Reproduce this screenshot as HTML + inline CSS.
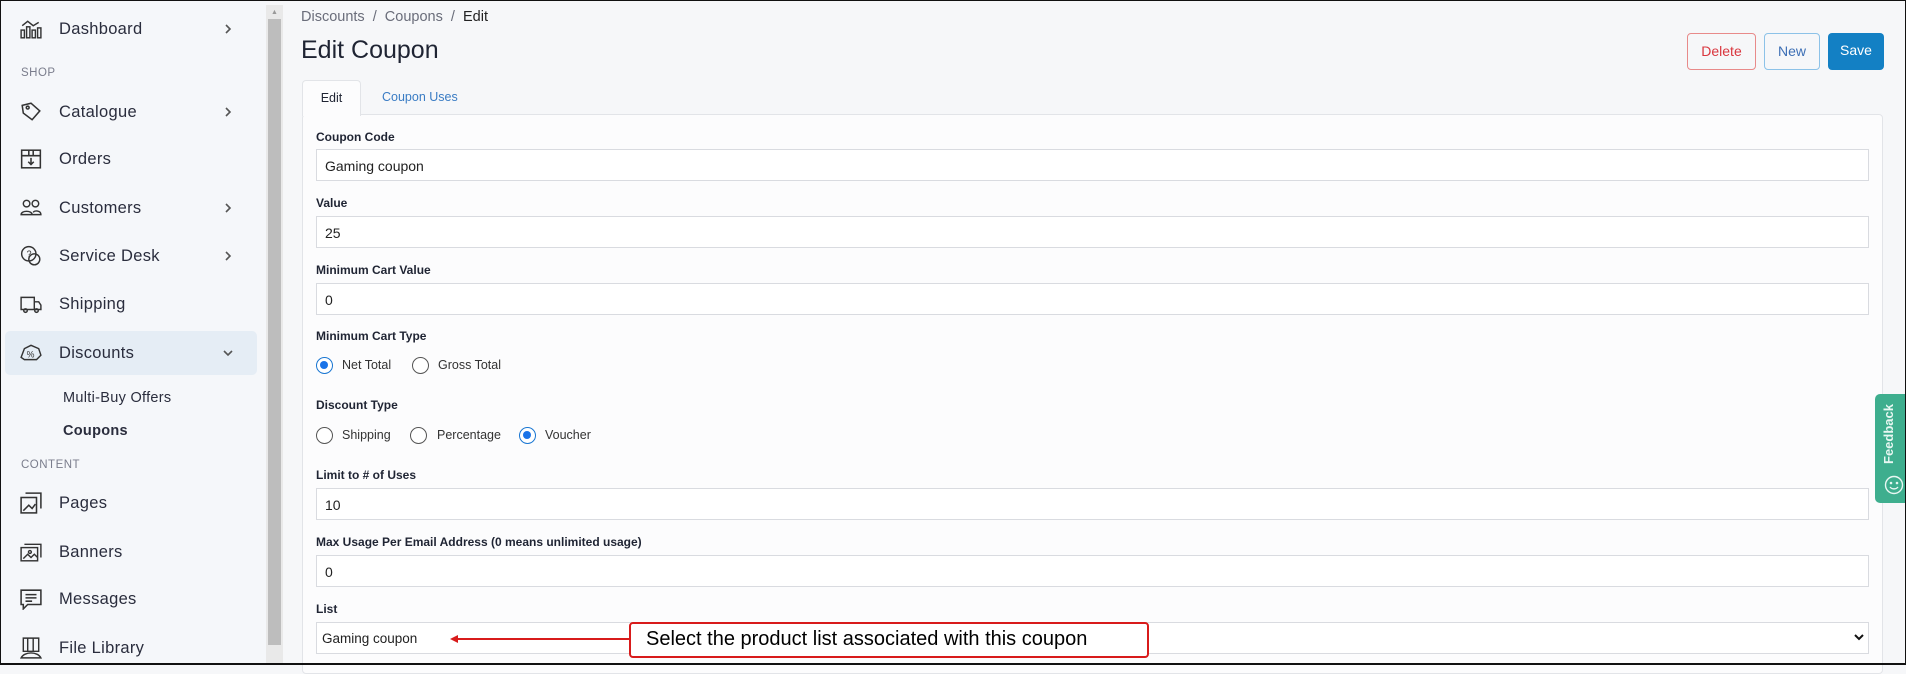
<!DOCTYPE html>
<html><head><meta charset="utf-8"><style>
*{box-sizing:border-box;margin:0;padding:0}
body{width:1906px;height:665px;overflow:hidden;font-family:"Liberation Sans",sans-serif;background:#f6f7f9;position:relative;color:#1f2433}
.frame{position:absolute;inset:0;border:1px solid #111;z-index:50;pointer-events:none;border-bottom-width:2px}
.side{position:absolute;left:0;top:0;width:266px;height:665px;background:#f5f7fa}
.it{position:absolute;left:59px;font-size:16.5px;color:#2a2d3d;letter-spacing:.3px;line-height:20px}
.ic{position:absolute;left:20px;width:22px;height:22px}
.chev{position:absolute;left:222px;width:12px;height:12px}
.sec{position:absolute;left:21px;font-size:11.5px;color:#7a7d8c;letter-spacing:.5px;line-height:14px}
.sb{position:absolute;left:266px;top:5px;width:17px;height:660px;background:#e9e9e9}
.thumb{position:absolute;left:268px;top:19px;width:13px;height:626px;background:#bdbdbd}
.lbl{position:absolute;left:316px;font-size:12px;font-weight:bold;color:#1f2433}
.inp{position:absolute;left:316px;width:1553px;height:32px;background:#fff;border:1px solid #d9dbe0;font-size:14px;padding:8px 0 0 8px;color:#222}
.btn{position:absolute;top:33px;height:37px;border-radius:4px;font-size:14px;text-align:center;line-height:35px}
.radio{position:absolute;width:17px;height:17px;border:1px solid #555;border-radius:50%;background:#fff}
.radio.on{border:1.5px solid #1976d2}
.radio.on:after{content:"";position:absolute;left:3px;top:3px;width:8px;height:8px;border-radius:50%;background:#1a73e8}
.rt{position:absolute;font-size:12.5px;color:#333}
</style></head><body>
<div class="side">
 <svg class="ic" style="top:18px" viewBox="0 0 20 20" fill="none" stroke="#333" stroke-width="1.3"><rect x="1" y="11" width="3" height="7"/><rect x="6" y="8" width="3" height="10"/><rect x="11" y="11" width="3" height="7"/><rect x="16" y="9" width="3" height="9"/><path d="M2 7 L7 3 L12 7 L17 4"/></svg>
 <div class="it" style="top:19px">Dashboard</div><svg class="chev" style="top:23px" viewBox="0 0 12 12"><path d="M4 2l4 4-4 4" stroke="#555" stroke-width="1.6" fill="none"/></svg>
 <div class="sec" style="top:66px">SHOP</div>
 <svg class="ic" style="top:101px" viewBox="0 0 20 20" fill="none" stroke="#333" stroke-width="1.4"><path d="M2 4 L10 2 L18 9 L11 17 L3 11Z"/><circle cx="7" cy="6" r="1.3"/></svg>
 <div class="it" style="top:102px">Catalogue</div><svg class="chev" style="top:106px" viewBox="0 0 12 12"><path d="M4 2l4 4-4 4" stroke="#555" stroke-width="1.6" fill="none"/></svg>
 <svg class="ic" style="top:148px" viewBox="0 0 20 20" fill="none" stroke="#333" stroke-width="1.4"><rect x="1.5" y="2" width="17" height="16"/><path d="M1.5 7H18.5M10 9v6M7.5 12.5L10 15l2.5-2.5M8 2v5h4V2"/></svg>
 <div class="it" style="top:149px">Orders</div>
 <svg class="ic" style="top:197px" viewBox="0 0 20 20" fill="none" stroke="#333" stroke-width="1.3"><circle cx="6" cy="6" r="3"/><circle cx="14" cy="6" r="3"/><path d="M1 16c0-4 10-4 10 0zM11 16h8c0-4-6-4-7-2"/></svg>
 <div class="it" style="top:198px">Customers</div><svg class="chev" style="top:202px" viewBox="0 0 12 12"><path d="M4 2l4 4-4 4" stroke="#555" stroke-width="1.6" fill="none"/></svg>
 <svg class="ic" style="top:245px" viewBox="0 0 20 20" fill="none" stroke="#333" stroke-width="1.3"><circle cx="8" cy="8" r="6.5"/><circle cx="13" cy="13" r="5"/><text x="6" y="11" font-size="8" fill="#333" stroke="none">?</text></svg>
 <div class="it" style="top:246px">Service Desk</div><svg class="chev" style="top:250px" viewBox="0 0 12 12"><path d="M4 2l4 4-4 4" stroke="#555" stroke-width="1.6" fill="none"/></svg>
 <svg class="ic" style="top:293px" viewBox="0 0 20 20" fill="none" stroke="#333" stroke-width="1.3"><path d="M1 4h12v11H1zM13 8h4l2 3v4h-6"/><circle cx="5" cy="16" r="1.6"/><circle cx="15" cy="16" r="1.6"/></svg>
 <div class="it" style="top:294px">Shipping</div>
 <div style="position:absolute;left:5px;top:331px;width:252px;height:44px;background:#e5edf5;border-radius:5px"></div>
 <svg class="ic" style="top:342px" viewBox="0 0 20 20" fill="none" stroke="#333" stroke-width="1.3"><path d="M1 14 L4 6 L10 3 L17 6 L19 12 L15 16 L4 16Z"/><text x="6" y="14" font-size="8" fill="#333" stroke="none">%</text></svg>
 <div class="it" style="top:343px">Discounts</div><svg class="chev" style="top:347px;left:222px" viewBox="0 0 12 12"><path d="M2 4l4 4 4-4" stroke="#555" stroke-width="1.6" fill="none"/></svg>
 <div class="it" style="left:63px;top:388px;font-size:14.5px">Multi-Buy Offers</div>
 <div class="it" style="left:63px;top:421px;font-size:14.5px;font-weight:bold">Coupons</div>
 <div class="sec" style="top:458px">CONTENT</div>
 <svg class="ic" style="top:492px" viewBox="0 0 20 20" fill="none" stroke="#333" stroke-width="1.4"><rect x="1" y="5" width="14" height="14"/><path d="M5 1h14v14M3 17l5-5 3 3 3-4"/></svg>
 <div class="it" style="top:493px">Pages</div>
 <svg class="ic" style="top:541px" viewBox="0 0 20 20" fill="none" stroke="#333" stroke-width="1.3"><rect x="1" y="6" width="15" height="12"/><path d="M4 3h15v12M3 16l4-4 3 3 3-3 3 3"/><circle cx="9" cy="10" r="1.3"/></svg>
 <div class="it" style="top:542px">Banners</div>
 <svg class="ic" style="top:588px" viewBox="0 0 20 20" fill="none" stroke="#333" stroke-width="1.4"><path d="M1 2h18v13H7l-4 4v-4H1z M5 6h10M5 9h10M5 12h6"/></svg>
 <div class="it" style="top:589px">Messages</div>
 <svg class="ic" style="top:637px" viewBox="0 0 20 20" fill="none" stroke="#333" stroke-width="1.3"><path d="M3 1h14v12H3zM7 1v12M12 1v12M1 19c3-6 15-6 18 0z"/></svg>
 <div class="it" style="top:638px">File Library</div>
</div>
<div class="sb"></div><div class="thumb"></div>
<div style="position:absolute;left:271px;top:9px;font-size:7px;color:#999">&#9650;</div>

<div style="position:absolute;left:301px;top:9px;font-size:14.5px;color:#6a6d7a">Discounts &nbsp;/&nbsp; Coupons &nbsp;/&nbsp; <span style="color:#222">Edit</span></div>
<div style="position:absolute;left:301px;top:36px;font-size:25px;color:#1f2433">Edit Coupon</div>
<div class="btn" style="left:1687px;width:69px;border:1px solid #e88a8a;color:#d9363e">Delete</div>
<div class="btn" style="left:1764px;width:56px;border:1px solid #8cc2e8;color:#3d6fb5">New</div>
<div class="btn" style="left:1828px;width:56px;background:#1380c4;color:#fff">Save</div>

<div style="position:absolute;left:302px;top:114px;width:1581px;height:560px;background:#fcfcfd;border:1px solid #e2e4e8;border-radius:4px"></div>
<div style="position:absolute;left:302px;top:80px;width:59px;height:36px;background:#fcfcfd;border:1px solid #e2e4e8;border-bottom:none;border-radius:4px 4px 0 0;font-size:12.5px;text-align:center;line-height:34px">Edit</div>
<div style="position:absolute;left:382px;top:90px;font-size:12.5px;color:#3a7cc4">Coupon Uses</div>

<div class="lbl" style="top:130px">Coupon Code</div><div class="inp" style="top:149px">Gaming coupon</div>
<div class="lbl" style="top:196px">Value</div><div class="inp" style="top:216px">25</div>
<div class="lbl" style="top:263px">Minimum Cart Value</div><div class="inp" style="top:283px">0</div>
<div class="lbl" style="top:329px">Minimum Cart Type</div>
<div class="radio on" style="left:316px;top:357px"></div><div class="rt" style="left:342px;top:358px">Net Total</div>
<div class="radio" style="left:412px;top:357px"></div><div class="rt" style="left:438px;top:358px">Gross Total</div>
<div class="lbl" style="top:398px">Discount Type</div>
<div class="radio" style="left:316px;top:427px"></div><div class="rt" style="left:342px;top:428px">Shipping</div>
<div class="radio" style="left:410px;top:427px"></div><div class="rt" style="left:437px;top:428px">Percentage</div>
<div class="radio on" style="left:519px;top:427px"></div><div class="rt" style="left:545px;top:428px">Voucher</div>
<div class="lbl" style="top:468px">Limit to # of Uses</div><div class="inp" style="top:488px">10</div>
<div class="lbl" style="top:535px">Max Usage Per Email Address (0 means unlimited usage)</div><div class="inp" style="top:555px">0</div>
<div class="lbl" style="top:602px">List</div><div class="inp" style="top:622px;padding-left:5px;font-size:13.5px">Gaming coupon</div>
<svg style="position:absolute;left:1853px;top:632px" width="12" height="10" viewBox="0 0 12 10"><path d="M2 3l4 4 4-4" stroke="#111" stroke-width="2" fill="none"/></svg>

<div style="position:absolute;left:452px;top:638px;width:178px;height:2px;background:#d81b1b"></div>
<div style="position:absolute;left:450px;top:635px;width:0;height:0;border-top:4px solid transparent;border-bottom:4px solid transparent;border-right:8px solid #d81b1b"></div>
<div style="position:absolute;left:629px;top:622px;width:520px;height:36px;background:#fff;border:2px solid #d81b1b;border-radius:4px;font-size:20px;color:#000;padding:4px 0 0 15px">Select the product list associated with this coupon</div>

<div style="position:absolute;left:1875px;top:394px;width:31px;height:109px;background:#3eae8e;border-radius:5px 0 0 5px"></div>
<div style="position:absolute;left:1881px;top:402px;writing-mode:vertical-rl;transform:rotate(180deg);font-size:13px;font-weight:bold;color:#e8f7f2;height:62px">Feedback</div>
<svg style="position:absolute;left:1884px;top:475px" width="20" height="20" viewBox="0 0 20 20" fill="none" stroke="#e8f7f2" stroke-width="1.4"><circle cx="10" cy="10" r="8.5"/><circle cx="7" cy="8" r=".6"/><circle cx="13" cy="8" r=".6"/><path d="M6 12c2 2.5 6 2.5 8 0"/></svg>
<div class="frame"></div>
</body></html>
